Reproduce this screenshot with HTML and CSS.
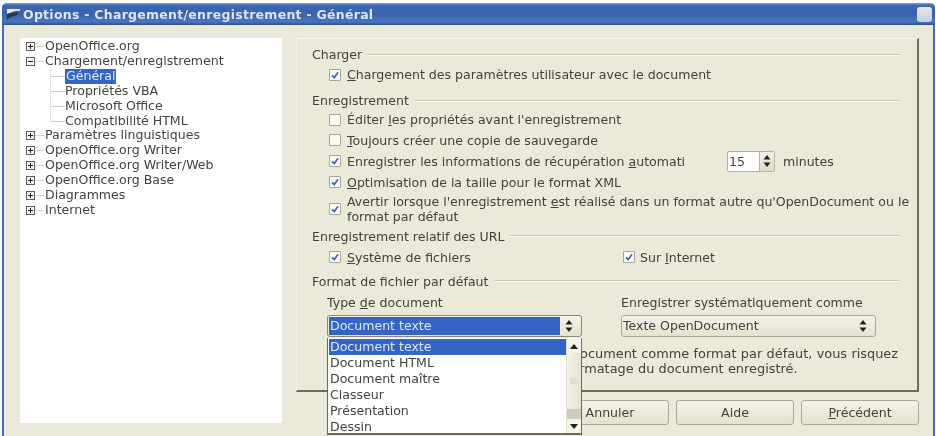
FILE: index.html
```html
<!DOCTYPE html>
<html lang="fr">
<head>
<meta charset="utf-8">
<title>Options</title>
<link rel="stylesheet" href="styles.css">
</head>
<body>
<svg class="defs" width="0" height="0">
  <symbol id="chk" viewBox="0 0 12 12"><path d="M2.5 6.5 L5 9.2 L9.6 2.6" fill="none" stroke="#3465c4" stroke-width="2"/></symbol>
  <symbol id="updown" viewBox="0 0 8 14"><path d="M4 1 L7.5 5.5 H0.5 Z M4 13 L0.5 8.5 H7.5 Z" fill="#222"/></symbol>
</svg>
<div class="window">
  <header class="titlebar">
    <svg class="appicon" width="15" height="14" viewBox="0 0 15 14"><path d="M1 2 H14 V4 C10 3 7 5 4 6 L1 7Z" fill="#e8e8e8"/><path d="M1 7 C5 6 9 5 13 6 L9 9 C6 9 4 10 1 13Z" fill="#1f3a4a"/></svg>
    <span class="title">Options - Chargement/enregistrement - Général</span>
    <span class="close"></span>
  </header>
  <div class="main">
    <ul class="tree">
      <li class="node"><i class="exp plus"></i><span>OpenOffice.org</span></li>
      <li class="node"><i class="exp"></i><span>Chargement/enregistrement</span></li>
      <li class="leaf"><span class="sel">Général</span></li>
      <li class="leaf"><span>Propriétés VBA</span></li>
      <li class="leaf"><span>Microsoft Office</span></li>
      <li class="leaf last"><span>Compatibilité HTML</span></li>
      <li class="node"><i class="exp plus"></i><span>Paramètres linguistiques</span></li>
      <li class="node"><i class="exp plus"></i><span>OpenOffice.org Writer</span></li>
      <li class="node"><i class="exp plus"></i><span>OpenOffice.org Writer/Web</span></li>
      <li class="node"><i class="exp plus"></i><span>OpenOffice.org Base</span></li>
      <li class="node"><i class="exp plus"></i><span>Diagrammes</span></li>
      <li class="node"><i class="exp plus"></i><span>Internet</span></li>
    </ul>
    <div class="right">
      <section class="panel">
        <h2 class="head">Charger</h2>
        <div class="row first"><span class="cb"><svg><use href="#chk"/></svg></span><span><u>C</u>hargement des paramètres utilisateur avec le document</span></div>

        <h2 class="head h-save">Enregistrement</h2>
        <div class="row"><span class="cb"></span><span>Éditer <u>l</u>es propriétés avant l'enregistrement</span></div>
        <div class="row"><span class="cb"></span><span><u>T</u>oujours créer une copie de sauvegarde</span></div>
        <div class="row"><span class="cb"><svg><use href="#chk"/></svg></span><span class="autotext">Enregistrer les informations de récupération <u>a</u>utomati</span>
          <span class="spin"><span class="spinval">15</span><span class="spinbtn"><svg width="8" height="14"><use href="#updown"/></svg></span></span><span class="unit">minutes</span></div>
        <div class="row"><span class="cb"><svg><use href="#chk"/></svg></span><span><u>O</u>ptimisation de la taille pour le format XML</span></div>
        <div class="row two"><span class="cb"><svg><use href="#chk"/></svg></span><span>Avertir lorsque l'enregistrement <u>e</u>st réalisé dans un format autre qu'OpenDocument ou le<br>format par défaut</span></div>

        <h2 class="head h-url">Enregistrement relatif des URL</h2>
        <div class="row split">
          <div class="cell"><span class="cb"><svg><use href="#chk"/></svg></span><span><u>S</u>ystème de fichiers</span></div>
          <div class="cell"><span class="cb"><svg><use href="#chk"/></svg></span><span>Sur <u>I</u>nternet</span></div>
        </div>

        <h2 class="head h-fmt">Format de fichier par défaut</h2>
        <div class="formats">
          <div class="field">
            <label>Type <u>d</u>e document</label>
            <div class="select focus"><span class="val">Document texte</span><svg width="8" height="14"><use href="#updown"/></svg></div>
          </div>
          <div class="field">
            <label>Enregistrer systématiquement comme</label>
            <div class="select"><span class="val">Texte OpenDocument</span><svg width="8" height="14"><use href="#updown"/></svg></div>
          </div>
        </div>
        <p class="note">Si vous ne choisissez pas OpenDocument comme format par défaut, vous risquez<br>de constater des pertes sur le formatage du document enregistré.</p>
      </section>
      <footer class="buttons">
        <button>OK</button>
        <button>Annuler</button>
        <button>Aide</button>
        <button><u>P</u>récédent</button>
      </footer>
    </div>
  </div>
  <div class="dropdown">
    <ul class="options">
      <li class="on">Document texte</li>
      <li>Document HTML</li>
      <li>Document maître</li>
      <li>Classeur</li>
      <li>Présentation</li>
      <li>Dessin</li>
    </ul>
    <div class="scroll">
      <span class="sb-btn"><svg width="8" height="5"><path d="M4 0 L8 5 H0Z" fill="#222"/></svg></span>
      <span class="thumb"></span>
      <span class="track"></span>
      <span class="sb-btn"><svg width="8" height="5"><path d="M0 0 H8 L4 5Z" fill="#222"/></svg></span>
    </div>
  </div>
</div>
</body>
</html>
```
FILE: styles.css
```css
* { box-sizing: border-box; }
html, body { margin: 0; padding: 0; background: #fff; }
body { width: 936px; height: 436px; overflow: hidden; font-family: "DejaVu Sans", sans-serif; font-size: 12.55px; color: #42423e; }
.defs { position: absolute; }
u { text-underline-offset: 1px; }
ul { list-style: none; margin: 0; padding: 0; }

.window { position: relative; margin: 3px 1px 0 2px; height: 433px; background: #ebe9d9; border-left: 2px solid #4670b6; border-right: 2px solid #3f69b2; border-radius: 5px 5px 0 0; filter: blur(0.6px); }
.titlebar { display: flex; align-items: center; height: 22px; margin: 0 -2px; padding: 0 3px 0 4px; border-radius: 5px 5px 0 0; background: linear-gradient(#7d9fd6 0, #3c66b2 12%, #3a63ad 55%, #4a76bf 85%, #2a4f95 100%); }
.appicon { flex: none; }
.title { margin-left: 2px; font-weight: bold; font-size: 12.5px; color: #dde5f3; letter-spacing: 0.27px; flex: 1; }
.close { width: 15px; height: 15px; border-radius: 3px; background: linear-gradient(#e6e8ec, #c8d0de); }

.main { display: flex; padding: 13px 0 0 16px; height: 411px; }
.tree { width: 262px; height: 385px; background: #fff; padding: 1px 0 0 6px; flex: none; }
.tree li { height: 14.92px; line-height: 14.92px; display: flex; align-items: center; position: relative; white-space: nowrap; }
.node span { margin-left: 10px; }
.node::before { content: ""; position: absolute; left: 9px; top: 7px; width: 9px; border-top: 1px solid #d6d6d0; }
.exp { position: relative; flex: none; width: 9px; height: 9px; border: 1px solid #5f5f58; background: #f4f4ee; }
.exp::before { content: ""; position: absolute; left: 1px; right: 1px; top: 3px; height: 1px; background: #222; }
.plus::after { content: ""; position: absolute; top: 1px; bottom: 1px; left: 3px; width: 1px; background: #222; }
.leaf { padding-left: 39px; }
.leaf::before { content: ""; position: absolute; left: 24px; top: 7px; width: 15px; border-top: 1px solid #cfcfc8; }
.leaf::after { content: ""; position: absolute; left: 24px; top: 0; height: 100%; border-left: 1px solid #e2e2dc; }
.leaf.last::after { height: 8px; }
.sel { background: #3465c4; color: #dfe8f8; padding: 0 1px; }

.right { margin-left: 14px; width: 623px; display: flex; flex-direction: column; }
.panel { height: 354px; padding: 8px 17px 0 15px; border-right: 2px solid #6d6b5e; border-bottom: 2px solid #6d6b5e; border-top: 1px solid #f6f5ec; border-left: 1px solid #f3f2e8; }
.head { display: flex; align-items: center; gap: 6px; margin: 0; font-weight: normal; font-size: 12.55px; height: 15px; line-height: 15px; white-space: nowrap; }
.head::after { content: ""; flex: 1; height: 2px; background: linear-gradient(#c9c7b6 50%, #f8f7ef 50%); }
.row { display: flex; align-items: center; gap: 6px; height: 20.8px; padding-left: 17px; white-space: nowrap; }
.row.first { margin-top: 2.5px; }
.row.two { height: 33px; margin-top: 0.5px; line-height: 15px; }
.h-save { margin-top: 8px; }
.h-save + .row { margin-top: 1px; }
.h-url { margin-top: 3px; }
.h-fmt { margin-top: 6px; }
.split { margin-top: 3px; gap: 0; }
.cb { flex: none; width: 12px; height: 12px; border: 1px solid #a5a498; background: #fbfbf6; border-radius: 1px; display: flex; }
.cb svg { width: 10px; height: 10px; }
.autotext { width: 374px; overflow: hidden; }
.spin { display: flex; height: 21px; width: 48px; border: 1px solid #b5b3a4; border-radius: 2px; background: #fff; }
.spinval { flex: 1; padding-left: 1px; line-height: 19px; }
.spinbtn { width: 15px; background: linear-gradient(#f1f0e5, #dedcc9); border-left: 1px solid #b5b3a4; display: flex; align-items: center; justify-content: center; }
.unit { margin-left: 2px; }
.cell { display: flex; flex: none; align-items: center; gap: 5px; width: 294px; }
.cell:first-child { gap: 6px; }

.formats { display: flex; gap: 39px; margin-top: 6px; padding-left: 15px; }
.field { width: 255px; }
.field label { display: block; height: 20px; line-height: 15px; }
.select { display: flex; align-items: center; height: 22px; padding: 0 8px 0 1px; border: 1px solid #a9a797; border-radius: 3px; background: linear-gradient(#f5f4ea, #e4e2cf); }
.select .val { flex: 1; }
.select.focus { padding-left: 1px; border-color: #8a8878; }
.select.focus .val { background: #3465c4; color: #dfe8f8; height: 18px; line-height: 18px; padding-left: 1px; margin-right: 5px; }
.note { margin: 9px 0 0 56px; font-size: 12.9px; line-height: 15px; white-space: nowrap; word-spacing: 0.2px; }

.buttons { display: flex; justify-content: flex-end; gap: 7px; margin-top: 8px; }
.buttons button { width: 118px; height: 25px; padding: 0; font: inherit; color: inherit; border: 1px solid #a9a797; border-radius: 3px; background: linear-gradient(#f4f3e8, #e3e1ce); }

.dropdown { position: absolute; left: 323px; top: 335px; width: 255px; height: 97px; display: flex; background: #fff; border: 1px solid #6d6b5e; border-width: 0 1px 2px 1px; padding-top: 1px; }
.options { flex: 1; padding-left: 1px; }
.options li { height: 16px; line-height: 16px; padding-left: 1px; }
.options .on { background: #3465c4; color: #dfe8f8; }
.scroll { width: 15px; display: flex; flex-direction: column; background: #efeee2; border-left: 1px solid #e0dfd0; }
.sb-btn { height: 14px; flex: none; display: flex; align-items: center; justify-content: center; background: #f4f3e8; }
.thumb { flex: none; height: 56px; background-image: linear-gradient(#e0decf, #e0decf), linear-gradient(90deg, #f5f4e9, #e5e3d2); background-size: 8px 6px, 100% 100%; background-position: center, center; background-repeat: no-repeat; }
.track { flex: 1; background: #cfcdb9; }
```
